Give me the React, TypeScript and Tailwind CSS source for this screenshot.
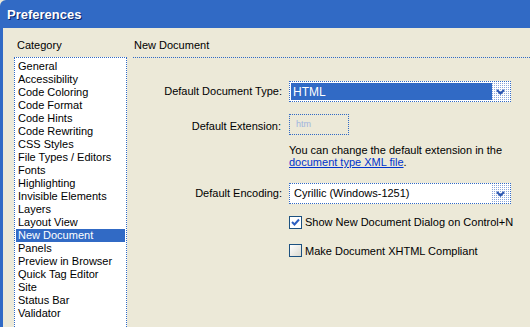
import React from 'react';

const categories = [
  'General',
  'Accessibility',
  'Code Coloring',
  'Code Format',
  'Code Hints',
  'Code Rewriting',
  'CSS Styles',
  'File Types / Editors',
  'Fonts',
  'Highlighting',
  'Invisible Elements',
  'Layers',
  'Layout View',
  'New Document',
  'Panels',
  'Preview in Browser',
  'Quick Tag Editor',
  'Site',
  'Status Bar',
  'Validator',
];

function DropButton({ id }: { id: string }) {
  return (
    <svg width="17" height="17" viewBox="0 0 17 17" className="shrink-0">
      <defs>
        <pattern id={id} width="2" height="2" patternUnits="userSpaceOnUse">
          <rect width="1" height="1" fill="#8aa6dc" />
        </pattern>
      </defs>
      <rect x="0" y="0" width="17" height="17" fill="#fff" />
      <rect x="0" y="0" width="17" height="17" fill={`url(#${id})`} />
      <path d="M5 7 L8.5 10.5 L12 7" fill="none" stroke="#2a55b0" strokeWidth="2" />
    </svg>
  );
}

function Checkbox({ checked }: { checked?: boolean }) {
  return (
    <div className="w-[13px] h-[13px] border border-[#1c5180] bg-white flex items-center justify-center shrink-0">
      {checked ? (
        <svg width="11" height="11" viewBox="0 0 11 11">
          <path d="M2 5 L4.5 7.5 L9 2.5" fill="none" stroke="#2d5fc0" strokeWidth="2" />
        </svg>
      ) : (
        <div className="w-full h-full bg-gradient-to-br from-white to-[#dcdad0]" />
      )}
    </div>
  );
}

export default function App() {
  return (
    <div className="w-[530px] h-[327px] overflow-hidden bg-[#ece9d8] text-[11px] text-black font-['Liberation_Sans',Arial,sans-serif] flex flex-col">
      {/* Title bar */}
      <div className="h-[28px] bg-[#316ac5] rounded-tl-[6px] flex items-center pl-[7px] pt-px shrink-0">
        <span className="text-white font-bold text-[13px] [text-shadow:1px_1px_0_#0a246a]">Preferences</span>
      </div>

      <div className="flex-1 flex border-l-[3px] border-[#316ac5] min-h-0">
        {/* Category column */}
        <div className="w-[124px] pl-[11px] flex flex-col shrink-0">
          <div className="h-[29px] pl-[3px] flex items-end pb-[6px] leading-none">Category</div>
          <div className="flex-1 bg-white border border-dotted border-[#316ac5] border-b-0 px-px pt-[2px]">
            {categories.map((c) =>
              c === 'New Document' ? (
                <div key={c} className="h-[13px] leading-[13px] pl-[2px] bg-[#316ac5] text-white">
                  {c}
                </div>
              ) : (
                <div key={c} className="h-[13px] leading-[13px] pl-[2px]">
                  {c}
                </div>
              )
            )}
          </div>
        </div>

        {/* Settings panel */}
        <div className="flex-1 pl-[6px] flex flex-col">
          <div className="h-[29px] pl-px flex items-end pb-[6px] leading-none">New Document</div>
          <div className="flex-1 border-t border-dotted border-[#316ac5] pt-[23px]">
            <div className="flex items-center">
              <div className="w-[156px] text-right pr-[7px]">Default Document Type:</div>
              <div className="w-[222px] h-[21px] border border-dotted border-[#316ac5] bg-white flex items-center p-px">
                <div className="flex-1 h-full bg-[#316ac5] text-white text-[12px] pl-[2px] flex items-center">HTML</div>
                <DropButton id="dots1" />
              </div>
            </div>

            <div className="flex items-start mt-[12px]">
              <div className="w-[156px] text-right pr-[8px] pt-[4px]">Default Extension:</div>
              <div>
                <div className="w-[60px] h-[21px] border border-dotted border-[#316ac5] text-[#9fb4de] text-[9px] pl-[6px] flex items-center">htm</div>
                <div className="mt-[9px] leading-[12px]">
                  You can change the default extension in the
                  <br />
                  <span className="text-[#0033cc] underline">document type XML file</span>.
                </div>
              </div>
            </div>

            <div className="flex items-center mt-[15px]">
              <div className="w-[156px] text-right pr-[7px]">Default Encoding:</div>
              <div className="w-[222px] h-[21px] border border-dotted border-[#316ac5] bg-white flex items-center p-px">
                <div className="flex-1 pl-[3px] text-[11px]">Cyrillic (Windows-1251)</div>
                <DropButton id="dots2" />
              </div>
            </div>

            <div className="ml-[156px] mt-[10px] flex items-center gap-[3px]">
              <Checkbox checked />
              <span>Show New Document Dialog on Control+N</span>
            </div>
            <div className="ml-[156px] mt-[12px] flex items-center gap-[3px]">
              <Checkbox />
              <span>Make Document XHTML Compliant</span>
            </div>
          </div>
        </div>
      </div>
    </div>
  );
}
